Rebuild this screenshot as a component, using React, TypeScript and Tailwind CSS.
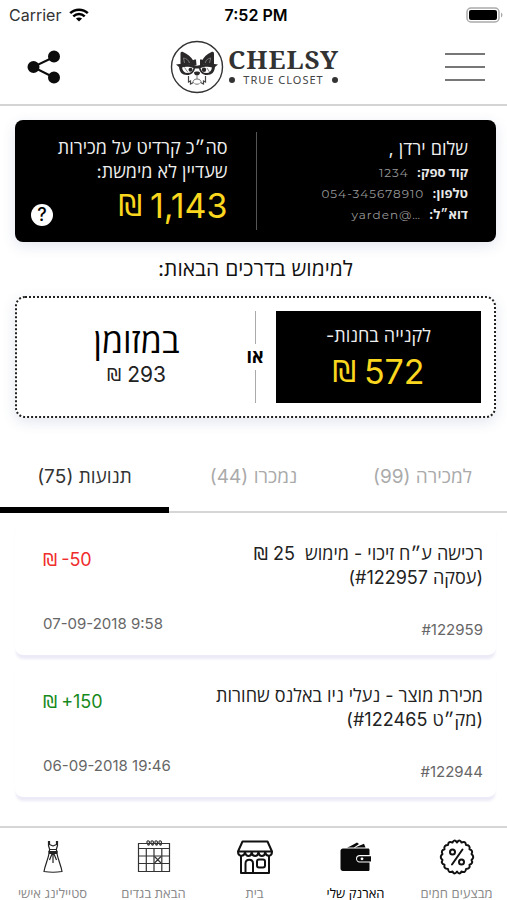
import type { ReactNode } from "react";

type Tab = { label: string; count: number; active?: boolean };
type Movement = {
  title: ReactNode;
  detail: string;
  amount: string;
  positive: boolean;
  date: string;
  id: string;
};

function Shekel({ className = "" }: { className?: string }) {
  return <span className={`font-['DejaVu_Sans',sans-serif] ${className}`}>₪</span>;
}

const tabs: Tab[] = [
  { label: "למכירה", count: 99 },
  { label: "נמכרו", count: 44 },
  { label: "תנועות", count: 75, active: true },
];

const movements: Movement[] = [
  {
    title: (
      <>
        רכישה ע״ח זיכוי - מימוש {"\u00a0"}25 <Shekel />
      </>
    ),
    detail: "(עסקה #122957)",
    amount: "-50",
    positive: false,
    date: "07-09-2018 9:58",
    id: "#122959",
  },
  {
    title: "מכירת מוצר - נעלי ניו באלנס שחורות",
    detail: "(מק״ט #122465)",
    amount: "+150",
    positive: true,
    date: "06-09-2018 19:46",
    id: "#122944",
  },
];

function StatusBar() {
  return (
    <div dir="ltr" className="grid h-[30px] grid-cols-3 items-center pl-[9px] pr-1">
      <div className="flex items-center gap-2 text-base text-[#333]">
        <span>Carrier</span>
        <svg width="20" height="14" viewBox="0 0 20 14" fill="none" stroke="#000" strokeWidth="2.5">
          <path d="M1.2 5.2C6 .5 14 .5 18.8 5.2M4.3 8.3c3.3-3.1 8.1-3.1 11.4 0" />
          <path d="M10 13.6 6.9 10.6c1.7-1.6 4.5-1.6 6.2 0Z" fill="#000" stroke="none" />
        </svg>
      </div>
      <div className="text-center text-base font-semibold text-black">7:52 PM</div>
      <svg className="justify-self-end" width="37" height="16" viewBox="0 0 37 16" fill="none">
        <rect x="1" y="1" width="32" height="14" rx="4" stroke="#aaa" strokeWidth="1.5" />
        <rect x="3" y="3" width="28" height="10" rx="2" fill="#000" />
        <path d="M35 5.5c2 1 2 4 0 5Z" fill="#aaa" />
      </svg>
    </div>
  );
}

function DogLogo() {
  return (
    <svg width="54" height="54" viewBox="0 0 54 54" fill="none">
      <circle cx="27" cy="27" r="25.5" stroke="#333" strokeWidth="1.4" />
      <path d="M10.500 24V14c0-2 .8-2.800 2.500-2 4.500 2 8.500 5 10.500 9L21 25Z" fill="#2b2829" />
      <path d="M44 24V14c0-2-.8-2.800-2.500-2-4.500 2-8 5-9.500 9l2 4Z" fill="#2b2829" />
      <path d="m14.500 23-1-5c3 .5 5 2 6 5M39.500 23l1.200-5c-3 .5-4.700 2-5.500 5" stroke="#777" strokeWidth="1" />
      <path d="M21 22c2-2 3-2.500 5-2.500l.5 5.500-5.500 1ZM30 19.500c2.500 0 4 .5 5 2.500l-2 4-3-1Z" fill="#2b2829" />
      <path d="M6 24.500c7-.8 14-.6 21 1.200 7-1.800 14-2 21-1.200L45 27c-.5 5-3 8-8 8-4.500 0-7-2.500-8-6.500h-4c-1 4-3.500 6.500-8 6.500-5 0-7.500-3-8-8Z" fill="#2b2829" />
      <path d="M12 27.500c3-1 8-.8 11.500.5-.7 3-2.500 5-6 5-3 0-5-2-5.500-5.500ZM42 27.500c-3-1-8-.8-11.500.5.7 3 2.500 5 6 5 3 0 5-2 5.500-5.500Z" fill="#fff" />
      <path d="m14.500 27.500 3.500 5M37 28l2.500 4" stroke="#888" />
      <circle cx="20.500" cy="29.800" r="2" fill="#2b2829" />
      <circle cx="34" cy="29.800" r="2.200" fill="#2b2829" />
      <path d="M24 32.500c1-1.200 5-1.200 6 0 0 1.700-1.500 3-3 3s-3-1.300-3-3Z" fill="#2b2829" />
      <path d="M18.500 36v6l2-1v3l3-1.500M35.500 36v6l-2-1v3l-3-1.500" stroke="#444" strokeWidth="1.200" />
      <path d="M27 35.500V39M27 39c-3 0-4.500 2-4 4M27 39c3 0 4.500 2 4 4M24.500 43.500c1.500 1 3.500 1 5 0" stroke="#777" />
    </svg>
  );
}

function Header() {
  return (
    <header className="flex h-[76px] items-center justify-between border-b-2 border-[#d4d4d4] pl-6 pr-[22px]">
      <button aria-label="תפריט" className="flex h-10 w-10 flex-col justify-center gap-[11px]">
        <span className="h-0.5 w-full bg-[#777]" />
        <span className="h-0.5 w-full bg-[#777]" />
        <span className="h-0.5 w-full bg-[#777]" />
      </button>
      <a href="#home" dir="ltr" className="flex items-center gap-1">
        <DogLogo />
        <span className="flex flex-col items-center">
          <span className="font-['Noto_Serif','DejaVu_Serif',serif] text-[26px] font-bold leading-[26px] tracking-[1px] text-[#333]">
            CHELSY
          </span>
          <span className="flex items-center gap-2 font-['Noto_Sans',sans-serif] text-[11px] leading-4 tracking-[1px] text-[#444]">
            <span className="h-1.5 w-1.5 rounded-full bg-[#333]" />
            TRUE CLOSET
            <span className="h-1.5 w-1.5 rounded-full bg-[#333]" />
          </span>
        </span>
      </a>
      <button aria-label="שיתוף" className="flex h-10 w-10 items-center justify-center">
        <svg width="34" height="34" viewBox="0 0 34 34" fill="#0c0c0c" stroke="#0c0c0c" strokeWidth="2">
          <path d="M27 7 6 17l21 10.500" fill="none" />
          <circle cx="6.500" cy="17" r="5" />
          <circle cx="27" cy="6.500" r="5" />
          <circle cx="27" cy="27.500" r="5" />
        </svg>
      </button>
    </header>
  );
}

function Detail({ label, value }: { label: string; value: string }) {
  return (
    <div className="flex h-[21px] items-center gap-2">
      <dt className="text-[13px] font-bold text-[#e8e8e8]">{label}</dt>
      <dd dir="ltr" className="font-[Montserrat,Inter,sans-serif] text-xs tracking-[1px] text-[#999]">
        {value}
      </dd>
    </div>
  );
}

function BigPrice({ value }: { value: string }) {
  return (
    <span className="flex h-[42px] items-center gap-2 text-[34px] text-[#fad71e]">
      <span dir="ltr">{value}</span>
      <Shekel className="text-[30px]" />
    </span>
  );
}

function Account() {
  return (
    <section className="flex h-[122px] rounded-lg bg-black py-3 text-[#eee] shadow-[0_4px_14px_rgba(60,80,140,0.14)]">
      <div className="w-1/2 border-l border-[#555] pr-7 pt-1">
        <h1 className="text-lg leading-[26px]">שלום ירדן ,</h1>
        <dl>
          <Detail label="קוד ספק:" value="1234" />
          <Detail label="טלפון:" value="054-345678910" />
          <Detail label="דוא״ל:" value="yarden@…" />
        </dl>
      </div>
      <div className="flex w-1/2 justify-between pl-4 pr-7">
        <div className="pt-1">
          <p className="whitespace-nowrap text-lg leading-6">
            סה״כ קרדיט על מכירות
            <br />
            שעדיין לא מימשת:
          </p>
          <BigPrice value="1,143" />
        </div>
        <button
          aria-label="עזרה"
          className="mb-1 flex h-[22px] w-[22px] shrink-0 items-center justify-center self-end rounded-full bg-white text-lg font-medium text-black"
        >
          ?
        </button>
      </div>
    </section>
  );
}

function DottedFrame() {
  return (
    <svg
      className="absolute inset-px h-[calc(100%-2px)] w-[calc(100%-2px)] overflow-visible"
      fill="none"
      aria-hidden="true"
    >
      <rect width="100%" height="100%" rx="9" stroke="#222" strokeWidth="2" strokeDasharray="2 2" />
    </svg>
  );
}

function Redeem() {
  return (
    <section>
      <h2 className="my-3 text-center text-[21px] leading-[30px] text-[#111]">למימוש בדרכים הבאות:</h2>
      <div className="relative flex h-[122px] items-stretch rounded-[10px] py-[15px] pr-[15px] shadow-[0_4px_14px_rgba(60,80,140,0.14)]">
        <DottedFrame />
        <button className="flex flex-[205] flex-col items-center justify-center bg-black">
          <span className="text-lg leading-7 text-[#eee]">לקנייה בחנות-</span>
          <BigPrice value="572" />
        </button>
        <div className="flex w-[42px] flex-col items-center text-lg font-bold leading-6 text-black">
          <span className="w-px flex-1 bg-[#aaa]" />
          <span className="py-px">או</span>
          <span className="w-px flex-1 bg-[#aaa]" />
        </div>
        <div className="flex flex-[219]">
          <button className="flex w-full flex-col items-center justify-center pl-6 text-black">
            <span className="text-[34px] leading-9">במזומן</span>
            <span className="flex h-8 items-center gap-1.5 text-[21px] text-[#222]">
              <span>293</span>
              <Shekel className="text-lg" />
            </span>
          </button>
        </div>
      </div>
    </section>
  );
}

function Tabs() {
  return (
    <div role="tablist" className="mt-[25px] grid h-[70px] grid-cols-3 border-b-2 border-[#d6d6d6]">
      {tabs.map((tab) => (
        <button
          key={tab.label}
          role="tab"
          aria-selected={!!tab.active}
          className={
            tab.active
              ? "h-[70px] border-b-[6px] border-black pt-1 text-[19px] text-[#333]"
              : "h-[70px] border-b-[6px] border-transparent pt-1 text-[19px] text-[#aaa]"
          }
        >
          {tab.label} ({tab.count})
        </button>
      ))}
    </div>
  );
}

function MovementCard({ item }: { item: Movement }) {
  return (
    <li className="flex h-[134px] justify-between rounded-lg bg-white pb-[17px] pl-7 pr-[13px] pt-[21px] shadow-[0_5px_3px_-1px_#ebeaf6]">
      <div className="flex flex-col justify-between">
        <p className="text-lg leading-6 text-[#222]">
          {item.title}
          <br />
          {item.detail}
        </p>
        <span dir="ltr" className="text-right text-[15px] leading-4 text-[#666]">
          {item.id}
        </span>
      </div>
      <div dir="ltr" className="flex flex-col justify-between pb-1.5 pt-1.5">
        <span
          className={
            item.positive
              ? "flex gap-1 text-lg leading-6 text-[#168a1c]"
              : "flex gap-1 text-lg leading-6 text-[#f02d2d]"
          }
        >
          <Shekel />
          <span>{item.amount}</span>
        </span>
        <time className="text-[15px] leading-4 text-[#666]">{item.date}</time>
      </div>
    </li>
  );
}

function DealsIcon() {
  return (
    <svg width="36" height="36" viewBox="0 0 36 36" fill="none" stroke="#111" strokeWidth="2" strokeLinejoin="round">
      <path d="M18 3.500Q20.500-.5 22.500 3.500 26.500 1.500 27 6 31.500 6 30.500 10.200 34.500 11.500 32.500 15 36 18 32.500 21 34.500 24.500 30.500 25.800 31.500 30 27 30 26.500 34.500 22.500 32.500 20.500 36.500 18 32.500 15.500 36.500 13.500 32.500 9.500 34.500 9 30 4.500 30 5.500 25.800 1.500 24.500 3.500 21 0 18 3.500 15 1.500 11.500 5.500 10.200 4.500 6 9 6 9.500 1.500 13.500 3.500 15.500-.5 18 3.500Z" />
      <path d="M23.500 10.500 13 25.500" strokeLinecap="round" />
      <circle cx="13.500" cy="13" r="2.500" />
      <circle cx="22.500" cy="23" r="2.500" />
    </svg>
  );
}

function WalletIcon() {
  return (
    <svg width="36" height="36" viewBox="0 0 36 36" fill="#0a0a0a">
      <path d="M9 8.500c4-1.200 6-3 10-5l2 1.500-5 3.500ZM17 8.500l9-3.800 1.500 3.800Z" />
      <path d="M5 9.500h25c1 0 1.500.7 1.500 1.500v5H21.500c-2 0-3.500 1.500-3.500 3.500s1.500 4 3.500 4h10v7c0 1-.5 1.500-1.500 1.500H5c-1.500 0-2.500-1-2.500-2.500V12c0-1.500 1-2.500 2.500-2.500Z" />
      <path d="M21.500 17.200H33v5.300H21.500c-3.300 0-3.300-5.300 0-5.300Z" />
      <circle cx="24" cy="19.800" r="1.400" fill="#fff" />
    </svg>
  );
}

function HomeIcon() {
  return (
    <svg width="38" height="36" viewBox="0 0 38 36" fill="none" stroke="#111" strokeWidth="2" strokeLinejoin="round">
      <path d="M6.500 2.500h25L36 12.500H2ZM2 12.500c0 5.500 6 5.500 7 1 1 4.500 6 4.500 6.700 0 .8 4.500 6 4.500 6.800 0 .8 4.500 6 4.500 6.700 0 1 4.500 6.800 4.500 6.800-1M5 17v17h28V17" />
      <path d="M9.500 34V24.500c0-5 7.500-5 7.500 0V34" />
      <rect x="21" y="20.500" width="8" height="8" rx="2" />
    </svg>
  );
}

function CalendarIcon() {
  return (
    <svg width="34" height="36" viewBox="0 0 34 36" fill="none" stroke="#333" strokeWidth="1.200">
      <path d="M1.500 4.500h31v28h-31ZM1.500 9.500h31M1.500 17h31M1.500 24.500h31M9.300 9.500v23M17 9.500v23M24.800 9.500v23" />
      <path d="m17.500 17.500 6.500 6.500M24 17.500 17.500 24M10 4c-.5-3 2.500-3 2.500 0S10.500 6.500 10.500 4M14 4c-.5-3 2.500-3 2.500 0S14.500 6.500 14.500 4M18 4c-.5-3 2.500-3 2.500 0S18.500 6.500 18.500 4M22 4c-.5-3 2.500-3 2.500 0S22.500 6.500 22.500 4" />
    </svg>
  );
}

function DressIcon() {
  return (
    <svg width="24" height="36" viewBox="0 0 24 36" fill="none" stroke="#222" strokeWidth="1.200" strokeLinejoin="round">
      <path d="M8.500 2v3.500L12 7l3.500-1.500V2M7.500 2v4.500l1.200 4-.7 2.500h8l-.7-2.500 1.200-4V2M8.700 10.500h6.600" />
      <path d="M8 12.500h8v2H8Z" fill="#222" />
      <path d="M8 14.500C7 21 4 26 3 32.500c6 1 12 1 18 0-1-6.500-4-11.500-5-18M12 15v9M11 15l-2.500 6M13 15l2.500 6" />
    </svg>
  );
}

const navItems: { label: string; icon: ReactNode; active?: boolean }[] = [
  { label: "מבצעים חמים", icon: <DealsIcon /> },
  { label: "הארנק שלי", icon: <WalletIcon />, active: true },
  { label: "בית", icon: <HomeIcon /> },
  { label: "הבאת בגדים", icon: <CalendarIcon /> },
  { label: "סטיילינג אישי", icon: <DressIcon /> },
];

function BottomNav() {
  return (
    <nav className="mt-auto grid h-[74px] grid-cols-5 border-t-2 border-[#d6d6d6] bg-white pl-0.5">
      {navItems.map((item) => (
        <a key={item.label} href="#nav" className="flex flex-col items-center gap-2.5 pt-[11px]">
          {item.icon}
          <span
            className={
              item.active
                ? "whitespace-nowrap text-[13px] leading-4 text-black"
                : "whitespace-nowrap text-[13px] leading-4 text-[#888]"
            }
          >
            {item.label}
          </span>
        </a>
      ))}
    </nav>
  );
}

export default function App() {
  return (
    <div
      dir="rtl"
      className="flex min-h-screen flex-col overflow-hidden bg-white font-[Inter,'Open_Sans','Liberation_Sans',sans-serif]"
    >
      <StatusBar />
      <Header />
      <main>
        <div className="pl-[15px] pr-[11px] pt-3.5">
          <Account />
          <Redeem />
        </div>
        <Tabs />
        <ul className="flex flex-col gap-2 pl-[15px] pr-[11px] pt-2">
          {movements.map((item) => (
            <MovementCard key={item.id} item={item} />
          ))}
        </ul>
      </main>
      <BottomNav />
    </div>
  );
}
